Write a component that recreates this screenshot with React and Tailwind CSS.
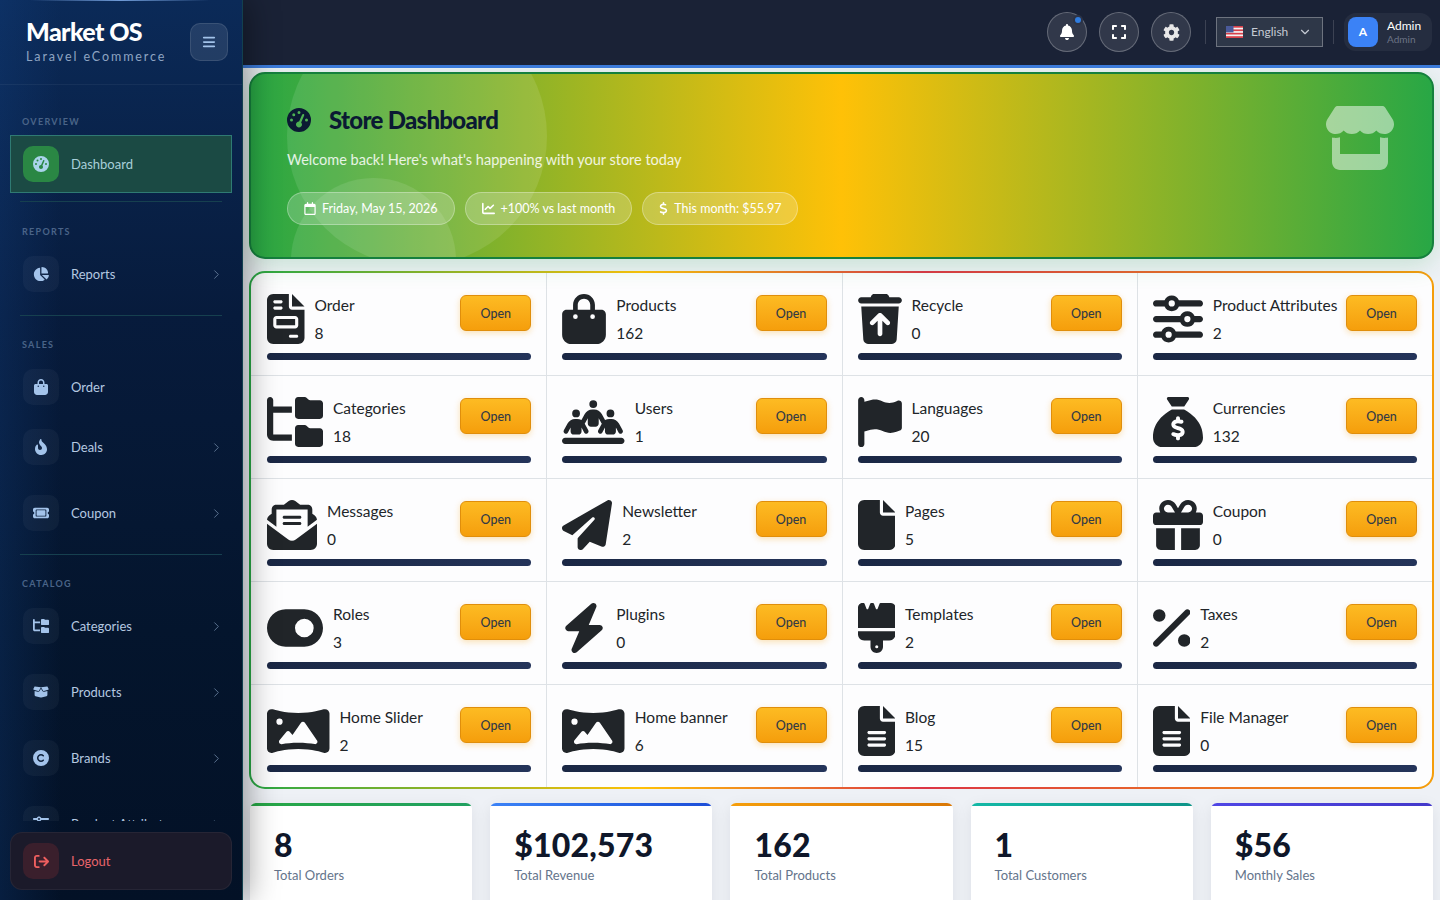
import { ChevronDown, ChevronRight } from 'lucide-react'
import { FaCog } from 'react-icons/fa'
import {
    FaArrowRightFromBracket, FaBars, FaBagShopping, FaBell, FaBolt, FaBoxOpen, FaBrush, FaChartLine, FaChartPie,
    FaCopyright, FaDollarSign, FaEnvelopeOpenText, FaExpand, FaFile, FaFileInvoice, FaFileLines, FaFireFlameCurved,
    FaFlag, FaFolderTree, FaGaugeHigh, FaGift, FaPanorama, FaPaperPlane, FaPeopleLine, FaPercent,
    FaRegCalendar, FaSackDollar, FaSliders, FaStore, FaTicket, FaToggleOn, FaTrashArrowUp,
} from 'react-icons/fa6'

const cells = [
    { name: 'Order', count: 8, icon: FaFileInvoice, w: 'w-[37.5px]' },
    { name: 'Products', count: 162, icon: FaBagShopping, w: 'w-[44px]' },
    { name: 'Recycle', count: 0, icon: FaTrashArrowUp, w: 'w-[44px]' },
    { name: 'Product Attributes', count: 2, icon: FaSliders, w: 'w-[50px]' },
    { name: 'Categories', count: 18, icon: FaFolderTree, w: 'w-[56px]' },
    { name: 'Users', count: 1, icon: FaPeopleLine, w: 'w-[62.5px]' },
    { name: 'Languages', count: 20, icon: FaFlag, w: 'w-[44px]' },
    { name: 'Currencies', count: 132, icon: FaSackDollar, w: 'w-[50px]' },
    { name: 'Messages', count: 0, icon: FaEnvelopeOpenText, w: 'w-[50px]' },
    { name: 'Newsletter', count: 2, icon: FaPaperPlane, w: 'w-[50px]' },
    { name: 'Pages', count: 5, icon: FaFile, w: 'w-[37.5px]' },
    { name: 'Coupon', count: 0, icon: FaGift, w: 'w-[50px]' },
    { name: 'Roles', count: 3, icon: FaToggleOn, w: 'w-[56px]' },
    { name: 'Plugins', count: 0, icon: FaBolt, w: 'w-[44px]' },
    { name: 'Templates', count: 2, icon: FaBrush, w: 'w-[37.5px]' },
    { name: 'Taxes', count: 2, icon: FaPercent, w: 'w-[37.5px]' },
    { name: 'Home Slider', count: 2, icon: FaPanorama, w: 'w-[62.5px]' },
    { name: 'Home banner', count: 6, icon: FaPanorama, w: 'w-[62.5px]' },
    { name: 'Blog', count: 15, icon: FaFileLines, w: 'w-[37.5px]' },
    { name: 'File Manager', count: 0, icon: FaFileLines, w: 'w-[37.5px]' },
]

const stats = [
    { value: '8', label: 'Total Orders', bar: 'bg-gradient-to-r from-[#28a745] to-[#20a060]' },
    { value: '$102,573', label: 'Total Revenue', bar: 'bg-gradient-to-r from-[#3b82f6] to-[#1d4ed8]' },
    { value: '162', label: 'Total Products', bar: 'bg-gradient-to-r from-[#f59e0b] to-[#d97706]' },
    { value: '1', label: 'Total Customers', bar: 'bg-gradient-to-r from-[#14b8a6] to-[#0d9488]' },
    { value: '$56', label: 'Monthly Sales', bar: 'bg-gradient-to-r from-[#4f46e5] to-[#4338ca]' },
]

function NavItem({ icon: Icon, label, sub }) {
    return (
        <div className={sub ? 'h-[66px]' : 'h-[60px]'}>
            <div className="mx-[10px] flex h-[58px] items-center gap-3 pl-[13px] pr-[8px]">
                <div className="flex h-9 w-9 items-center justify-center rounded-[10px] bg-white/[0.04] text-[#a3c3ea]">
                    <Icon size={16} />
                </div>
                <span className="mt-[2px] flex-1 whitespace-nowrap text-[13px] text-[#b4c8e0]">{label}</span>
                {sub && <ChevronRight size={15} strokeWidth={1.5} className="text-[#5f7694]" />}
            </div>
        </div>
    )
}

function Heading({ children }) {
    return <div className="mb-[7px] h-[13px] pl-[22px] text-[9px] font-bold leading-[13px] tracking-[1.3px] text-[#4a6488]">{children}</div>
}

function Sidebar() {
    return (
        <aside className="relative z-10 flex h-screen w-[243px] shrink-0 flex-col border-r border-[#12404f] bg-[linear-gradient(90deg,rgba(20,70,140,0.25),transparent_25%),linear-gradient(180deg,#0b2a58_0%,#071b3c_35%,#04152d_70%,#031126_100%)] shadow-[4px_0_30px_rgba(0,0,0,0.4)]">
            <div className="absolute left-[30px] top-0 h-px w-[180px] bg-gradient-to-r from-transparent via-[#6f9ad6] to-transparent" />
            <div className="flex h-[85px] shrink-0 items-start justify-between border-b border-white/5 pl-[26px] pr-[14px] pt-[16px]">
                <div>
                    <div className="text-[25px] font-black leading-[30px] tracking-[-0.6px] text-white">Market OS</div>
                    <div className="mt-[3px] text-[12.5px] leading-4 tracking-[1.9px] text-[#8ea4c2]">Laravel eCommerce</div>
                </div>
                <button className="mt-[7px] flex h-[38px] w-[38px] items-center justify-center rounded-[10px] border border-white/10 bg-white/10 text-[#a3c3ea]">
                    <FaBars size={14} />
                </button>
            </div>
            <nav className="min-h-0 flex-1 overflow-hidden pt-[30px]">
                <Heading>OVERVIEW</Heading>
                <div className="h-[60px]">
                    <div className="mx-[10px] flex h-[58px] items-center gap-3 border border-[#2f7a73] bg-[#1b4a44] pl-3 pr-[10px]">
                        <div className="flex h-9 w-9 items-center justify-center rounded-[10px] bg-[#2a8744] text-[#a9d4ea]">
                            <FaGaugeHigh size={16} />
                        </div>
                        <span className="mt-[2px] text-[13px] text-[#a8cfd9]">Dashboard</span>
                    </div>
                </div>
                <div className="mx-5 mb-[23px] mt-[6px] h-px bg-[#16404f]" />
                <Heading>REPORTS</Heading>
                <NavItem icon={FaChartPie} label="Reports" sub />
                <div className="mx-5 mb-[22px] mt-1 h-px bg-[#16404f]" />
                <Heading>SALES</Heading>
                <NavItem icon={FaBagShopping} label="Order" />
                <NavItem icon={FaFireFlameCurved} label="Deals" sub />
                <NavItem icon={FaTicket} label="Coupon" sub />
                <div className="mx-5 mb-[22px] mt-1 h-px bg-[#16404f]" />
                <Heading>CATALOG</Heading>
                <NavItem icon={FaFolderTree} label="Categories" sub />
                <NavItem icon={FaBoxOpen} label="Products" sub />
                <NavItem icon={FaCopyright} label="Brands" sub />
                <NavItem icon={FaSliders} label="Product Attributes" sub />
            </nav>
            <div className="shrink-0 px-[10px] pb-[10px] pt-[11px]">
                <div className="flex h-[58px] items-center gap-3 rounded-xl border border-white/5 bg-[#1b1a2a] pl-3">
                    <div className="flex h-9 w-9 items-center justify-center rounded-[10px] bg-[#3a1f2c] text-[#ef5f5f]">
                        <FaArrowRightFromBracket size={15} />
                    </div>
                    <span className="mt-[2px] text-[13px] text-[#e8656a]">Logout</span>
                </div>
            </div>
        </aside>
    )
}

function RoundButton({ children }) {
    return (
        <button className="relative flex h-10 w-10 items-center justify-center rounded-full border border-white/25 bg-white/10 text-white">
            {children}
        </button>
    )
}

function UsFlag() {
    return (
        <svg width="17" height="12" viewBox="0 0 17 12">
            <rect width="17" height="12" fill="#f4f4f4" />
            <rect width="17" height="1.7" fill="#d8404a" />
            <rect y="3.4" width="17" height="1.7" fill="#d8404a" />
            <rect y="6.8" width="17" height="1.7" fill="#d8404a" />
            <rect y="10.2" width="17" height="1.8" fill="#d8404a" />
            <rect width="7.5" height="6.4" fill="#4a5a9a" />
        </svg>
    )
}

function Header() {
    return (
        <header className="flex h-[68px] shrink-0 items-center justify-end border-b-[3px] border-[#3b7ad9] bg-[#1a2236] pb-[1px] pr-2">
            <div className="flex items-center gap-3">
                <RoundButton>
                    <FaBell size={16} />
                    <span className="absolute right-[5px] top-[4px] h-[6px] w-[6px] rounded-full bg-[#2f7de0] ring-2 ring-[#2c3346]" />
                </RoundButton>
                <RoundButton><FaExpand size={16} /></RoundButton>
                <RoundButton><FaCog size={17} className="text-[#e8e8e8]" /></RoundButton>
            </div>
            <div className="ml-[14px] mr-[10px] h-6 w-px bg-white/15" />
            <div className="flex h-[30px] w-[107px] items-center border border-white/30 bg-[#2e3748] pl-[9px] pr-[10px]">
                <UsFlag />
                <span className="ml-2 flex-1 text-[12px] text-[#c5cad3]">English</span>
                <ChevronDown size={14} className="text-[#c5cad3]" />
            </div>
            <div className="ml-[10px] mr-[10px] h-6 w-px bg-white/15" />
            <div className="flex h-[38px] w-[88px] items-center gap-[9px] rounded-xl bg-white/5 pl-1">
                <div className="flex h-[30px] w-[30px] items-center justify-center rounded-lg bg-[#3b82f6] text-[12px] font-bold text-white">A</div>
                <div>
                    <div className="text-[12px] leading-[14px] text-white">Admin</div>
                    <div className="text-[10px] leading-3 text-[#6c7486]">Admin</div>
                </div>
            </div>
        </header>
    )
}

function Pill({ icon: Icon, iconClass, children }) {
    return (
        <div className="flex h-[33px] items-center gap-[6px] rounded-full border border-white/30 bg-white/20 px-4 text-[12.5px] text-white">
            <Icon className={`h-[13px] ${iconClass}`} />
            <span className="mt-[2px]">{children}</span>
        </div>
    )
}

function Banner() {
    return (
        <section className="relative -mx-px h-[187px] overflow-hidden rounded-2xl border-2 border-[#15803d] bg-[linear-gradient(90deg,#28a745_0%,#ffc107_50%,#28a745_100%)] pl-[36px] pt-[31px] shadow-[0_6px_24px_rgba(40,167,69,0.2)]">
            <div className="absolute -top-[68px] left-[36px] h-[260px] w-[260px] rounded-full bg-white/10" />
            <div className="absolute left-[40px] top-[104px] h-[165px] w-[165px] rounded-full bg-white/10" />
            <div className="relative flex h-[30px] items-center gap-[18px] text-[#0b1a33]">
                <FaGaugeHigh size={24} />
                <h1 className="text-[24px] font-black tracking-[-0.7px]">Store Dashboard</h1>
            </div>
            <p className="relative mt-[13px] text-[14.5px] leading-[24px] text-white/85">Welcome back! Here's what's happening with your store today</p>
            <div className="relative mt-[20px] flex gap-[10px]">
                <Pill icon={FaRegCalendar} iconClass="w-[12px]">Friday, May 15, 2026</Pill>
                <Pill icon={FaChartLine} iconClass="w-[13px]">+100% vs last month</Pill>
                <Pill icon={FaDollarSign} iconClass="w-[9px]">This month: $55.97</Pill>
            </div>
            <FaStore className="absolute right-[36px] top-[32px] h-[64px] w-[72px] text-white/50" />
        </section>
    )
}

function Cell({ cell, index }) {
    const Icon = cell.icon
    return (
        <div className={`border-[#dee2e6] pb-[15px] pr-[15px] pt-[21px] ${index % 4 === 0 ? 'pl-[16px]' : 'border-l pl-[15px]'} ${index < 16 ? 'border-b' : ''}`}>
            <div className="flex items-start justify-between">
                <div className="flex h-[50px] items-start gap-[10px] text-[#212529]">
                    <Icon className={`h-[50px] shrink-0 ${cell.w}`} />
                    <div className="text-[15.5px] leading-6">
                        <div className="-mt-px whitespace-nowrap">{cell.name}</div>
                        <div className="mt-[4px]">{cell.count}</div>
                    </div>
                </div>
                <button className="mt-px h-9 w-[71px] shrink-0 rounded-md border border-[#e08e0b] bg-gradient-to-b from-[#fdbb22] to-[#f59e0b] pt-[2px] text-[12.5px] font-medium text-[#333a45] shadow-[0_2px_6px_rgba(245,158,11,0.3)]">
                    Open
                </button>
            </div>
            <div className="mt-[9px] h-[7px] rounded-full bg-gradient-to-r from-[#1a2744] to-[#24345a]" />
        </div>
    )
}

function StatCard({ stat }) {
    return (
        <div className="h-[130px] overflow-hidden rounded-t-md bg-white shadow-[0_4px_16px_rgba(15,23,42,0.08)]">
            <div className={`h-[3px] ${stat.bar}`} />
            <div className="pl-6 pt-[19px]">
                <div className="text-[32px] font-black leading-[40px] tracking-[0.2px] text-[#0f172a]">{stat.value}</div>
                <div className="text-[13px] leading-5 text-[#64748b]">{stat.label}</div>
            </div>
        </div>
    )
}

export default function App() {
    return (
        <div className="flex h-screen overflow-hidden bg-[#eef1f6] font-['Lato',sans-serif]">
            <Sidebar />
            <div className="flex min-w-0 flex-1 flex-col">
                <Header />
                <main className="min-h-0 flex-1 overflow-hidden px-[7px] pt-[4px]">
                    <Banner />
                    <section className="-mx-px mt-[12px] grid grid-cols-4 rounded-2xl border-2 border-transparent [background:linear-gradient(#fdfdfe,#fdfdfe)_padding-box,linear-gradient(90deg,#28a745,#ffc107_33%,#dc3545_57%,#f59e0b_100%)_border-box]">
                        {cells.map((cell, i) => (
                            <Cell key={i} cell={cell} index={i} />
                        ))}
                    </section>
                    <section className="mt-[14px] grid grid-cols-5 gap-[18px]">
                        {stats.map(stat => (
                            <StatCard key={stat.label} stat={stat} />
                        ))}
                    </section>
                </main>
            </div>
        </div>
    )
}
